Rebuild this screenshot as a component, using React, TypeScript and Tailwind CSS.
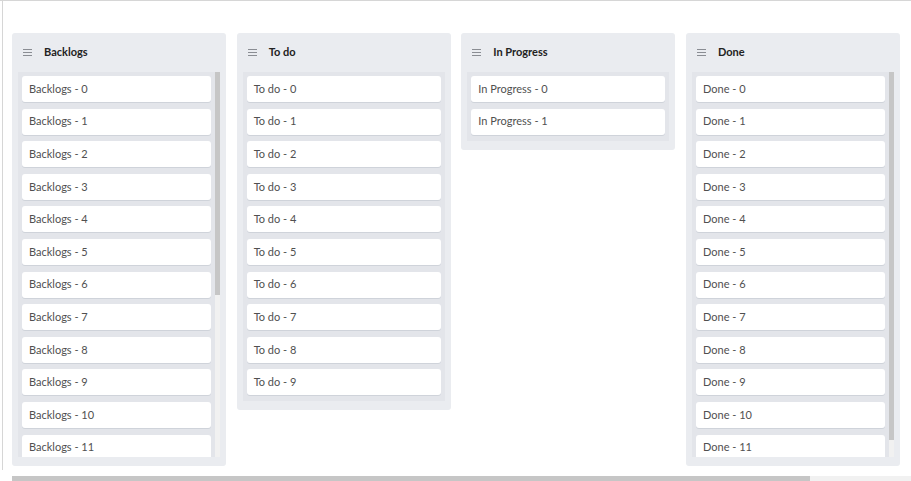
import React from "react";

interface ColumnProps {
  title: string;
  count: number;
}

const columns: ColumnProps[] = [
  { title: "Backlogs", count: 20 },
  { title: "To do", count: 10 },
  { title: "In Progress", count: 2 },
  { title: "Done", count: 12 },
];

const LIST_HEIGHT = 385;

function MenuIcon() {
  return (
    <svg width="9" height="7" viewBox="0 0 9 7" className="shrink-0">
      <path d="M0 0.5h9M0 3.5h9M0 6.5h9" stroke="#8a8d93" strokeWidth="1" />
    </svg>
  );
}

function Column({ title, count }: ColumnProps) {
  // card 26px + gap 6.6px, list padding 4px top / 6px bottom
  const contentHeight = 10 + count * 26 + (count - 1) * 6.6;
  const overflowing = contentHeight > LIST_HEIGHT;
  const thumb = Math.min(1, LIST_HEIGHT / (contentHeight + 8)) * 100;

  return (
    <div className="w-[214px] shrink-0 rounded-[3px] bg-[#eaecf0] pb-[9px]">
      <div className="flex h-[39px] items-center gap-[12px] px-[11px]">
        <MenuIcon />
        <h3 className="text-[11px] font-bold text-[#222]">{title}</h3>
      </div>
      <div className="mx-[6px] flex max-h-[385px] overflow-hidden bg-[#e3e5ea]">
        <div className="flex min-w-0 flex-1 flex-col gap-[6.6px] overflow-hidden px-[4px] pb-[6px] pt-[4px]">
          {Array.from({ length: count }, (_, i) => (
            <div
              key={i}
              className="flex h-[26px] shrink-0 items-center rounded-[3px] bg-white px-[7px] text-[11px] text-[#505050] shadow-[0_1px_0_#cfd3da]"
            >
              {title} - {i}
            </div>
          ))}
        </div>
        {overflowing && (
          <div className="w-[5px] shrink-0 bg-[#f1f1f1]">
            <div className="w-full bg-[#c6c6c6]" style={{ height: `${thumb}%` }} />
          </div>
        )}
      </div>
    </div>
  );
}

export default function App() {
  return (
    <div className="h-[481px] overflow-hidden border-t border-[#d6d6d6] font-['Lato','Liberation_Sans',sans-serif]">
      <div className="ml-[2px] h-[469px] border-l border-[#d6d6d6] pl-[9px] pt-[32px]">
        <div className="flex h-[443px] items-start gap-[10.67px] overflow-hidden">
          {columns.map((c) => (
            <Column key={c.title} {...c} />
          ))}
          <div className="h-[89px] w-[116px] shrink-0 rounded-[3px] border border-[#eceef2] bg-white" />
        </div>
        <div className="relative z-10 flex h-[6px] bg-[#f1f1f1]">
          <div className="h-full w-[798px] bg-[#c6c6c6]" />
        </div>
      </div>
    </div>
  );
}
